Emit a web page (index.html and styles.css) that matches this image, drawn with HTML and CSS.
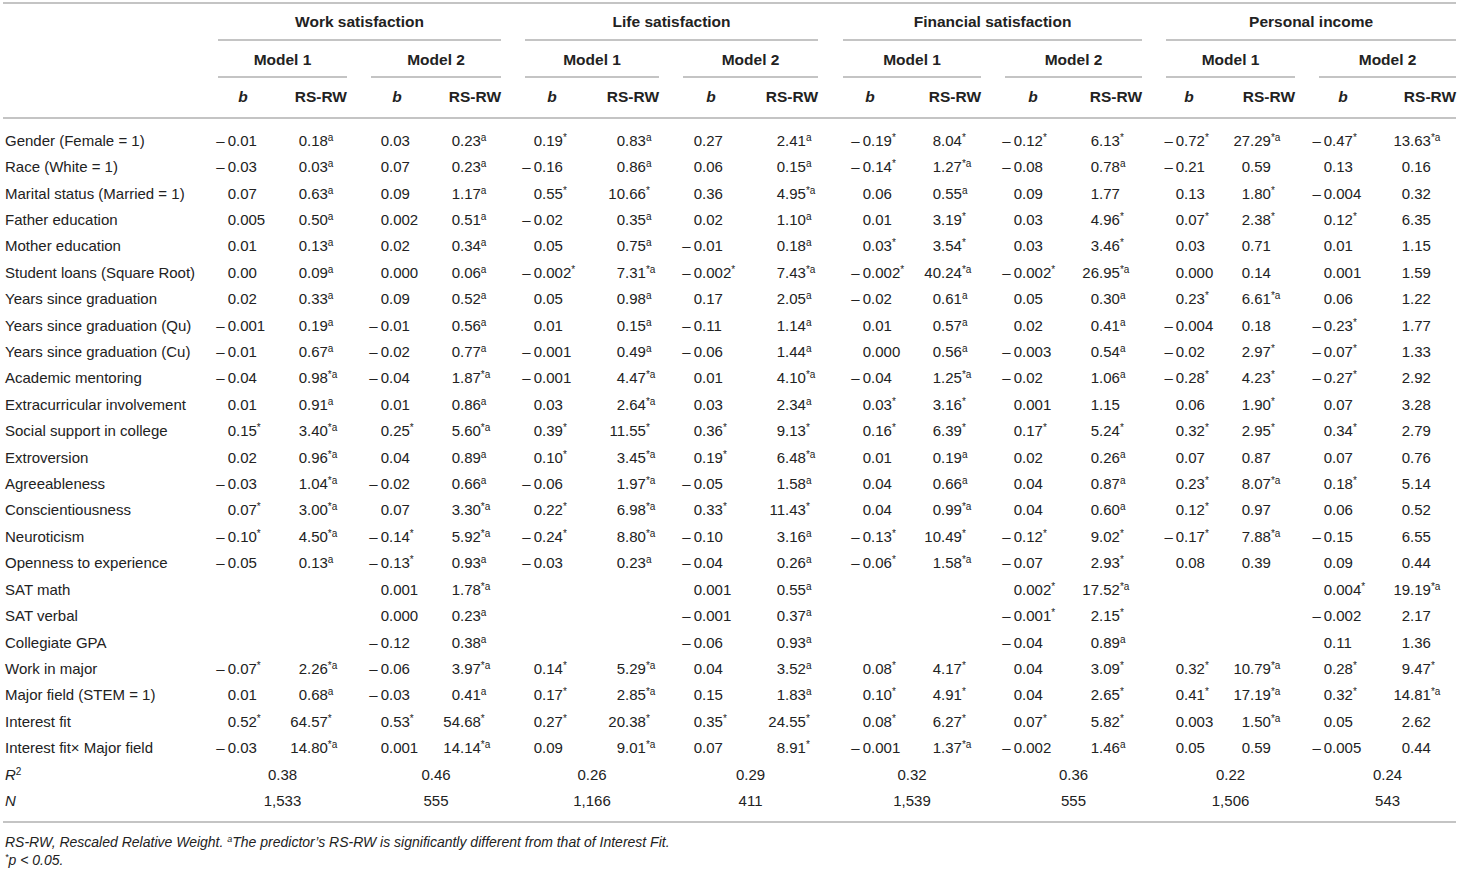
FILE: index.html
```html
<!DOCTYPE html>
<html lang="en">
<head>
<meta charset="utf-8">
<title>Relative weights table</title>
<link rel="stylesheet" href="styles.css">
</head>
<body>
<table class="tbl">
<colgroup>
<col class="c1"><col class="c2"><col class="c3"><col class="c4"><col class="c5"><col class="c6"><col class="c7"><col class="c8"><col class="c9"><col class="c10"><col class="c11"><col class="c12"><col class="c13"><col class="c14"><col class="c15"><col class="c16"><col class="c17">
</colgroup>
<thead>
<tr class="h1">
<th class="lab" rowspan="3"></th>
<th colspan="4"><div>Work satisfaction</div></th>
<th colspan="4"><div>Life satisfaction</div></th>
<th colspan="4"><div>Financial satisfaction</div></th>
<th colspan="4"><div>Personal income</div></th>
</tr>
<tr class="h2">
<th colspan="2"><div>Model 1</div></th>
<th colspan="2"><div>Model 2</div></th>
<th colspan="2"><div>Model 1</div></th>
<th colspan="2"><div>Model 2</div></th>
<th colspan="2"><div>Model 1</div></th>
<th colspan="2"><div>Model 2</div></th>
<th colspan="2"><div>Model 1</div></th>
<th colspan="2"><div>Model 2</div></th>
</tr>
<tr class="h3">
<th class="bh"><i>b</i></th><th class="rh">RS-RW</th>
<th class="bh"><i>b</i></th><th class="rh">RS-RW</th>
<th class="bh"><i>b</i></th><th class="rh">RS-RW</th>
<th class="bh"><i>b</i></th><th class="rh">RS-RW</th>
<th class="bh"><i>b</i></th><th class="rh">RS-RW</th>
<th class="bh"><i>b</i></th><th class="rh">RS-RW</th>
<th class="bh"><i>b</i></th><th class="rh">RS-RW</th>
<th class="bh"><i>b</i></th><th class="rh">RS-RW</th>
</tr>
</thead>
<tbody>
<tr><td>Gender (Female = 1)</td>
<td><span>–&thinsp;0</span>.01</td><td><span>0</span>.18<sup>a</sup></td>
<td><span>0</span>.03</td><td><span>0</span>.23<sup>a</sup></td>
<td><span>0</span>.19<sup>*</sup></td><td><span>0</span>.83<sup>a</sup></td>
<td><span>0</span>.27</td><td><span>2</span>.41<sup>a</sup></td>
<td><span>–&thinsp;0</span>.19<sup>*</sup></td><td><span>8</span>.04<sup>*</sup></td>
<td><span>–&thinsp;0</span>.12<sup>*</sup></td><td><span>6</span>.13<sup>*</sup></td>
<td><span>–&thinsp;0</span>.72<sup>*</sup></td><td><span>27</span>.29<sup>*a</sup></td>
<td><span>–&thinsp;0</span>.47<sup>*</sup></td><td><span>13</span>.63<sup>*a</sup></td></tr>
<tr><td>Race (White = 1)</td>
<td><span>–&thinsp;0</span>.03</td><td><span>0</span>.03<sup>a</sup></td>
<td><span>0</span>.07</td><td><span>0</span>.23<sup>a</sup></td>
<td><span>–&thinsp;0</span>.16</td><td><span>0</span>.86<sup>a</sup></td>
<td><span>0</span>.06</td><td><span>0</span>.15<sup>a</sup></td>
<td><span>–&thinsp;0</span>.14<sup>*</sup></td><td><span>1</span>.27<sup>*a</sup></td>
<td><span>–&thinsp;0</span>.08</td><td><span>0</span>.78<sup>a</sup></td>
<td><span>–&thinsp;0</span>.21</td><td><span>0</span>.59</td>
<td><span>0</span>.13</td><td><span>0</span>.16</td></tr>
<tr><td>Marital status (Married = 1)</td>
<td><span>0</span>.07</td><td><span>0</span>.63<sup>a</sup></td>
<td><span>0</span>.09</td><td><span>1</span>.17<sup>a</sup></td>
<td><span>0</span>.55<sup>*</sup></td><td><span>10</span>.66<sup>*</sup></td>
<td><span>0</span>.36</td><td><span>4</span>.95<sup>*a</sup></td>
<td><span>0</span>.06</td><td><span>0</span>.55<sup>a</sup></td>
<td><span>0</span>.09</td><td><span>1</span>.77</td>
<td><span>0</span>.13</td><td><span>1</span>.80<sup>*</sup></td>
<td><span>–&thinsp;0</span>.004</td><td><span>0</span>.32</td></tr>
<tr><td>Father education</td>
<td><span>0</span>.005</td><td><span>0</span>.50<sup>a</sup></td>
<td><span>0</span>.002</td><td><span>0</span>.51<sup>a</sup></td>
<td><span>–&thinsp;0</span>.02</td><td><span>0</span>.35<sup>a</sup></td>
<td><span>0</span>.02</td><td><span>1</span>.10<sup>a</sup></td>
<td><span>0</span>.01</td><td><span>3</span>.19<sup>*</sup></td>
<td><span>0</span>.03</td><td><span>4</span>.96<sup>*</sup></td>
<td><span>0</span>.07<sup>*</sup></td><td><span>2</span>.38<sup>*</sup></td>
<td><span>0</span>.12<sup>*</sup></td><td><span>6</span>.35</td></tr>
<tr><td>Mother education</td>
<td><span>0</span>.01</td><td><span>0</span>.13<sup>a</sup></td>
<td><span>0</span>.02</td><td><span>0</span>.34<sup>a</sup></td>
<td><span>0</span>.05</td><td><span>0</span>.75<sup>a</sup></td>
<td><span>–&thinsp;0</span>.01</td><td><span>0</span>.18<sup>a</sup></td>
<td><span>0</span>.03<sup>*</sup></td><td><span>3</span>.54<sup>*</sup></td>
<td><span>0</span>.03</td><td><span>3</span>.46<sup>*</sup></td>
<td><span>0</span>.03</td><td><span>0</span>.71</td>
<td><span>0</span>.01</td><td><span>1</span>.15</td></tr>
<tr><td>Student loans (Square Root)</td>
<td><span>0</span>.00</td><td><span>0</span>.09<sup>a</sup></td>
<td><span>0</span>.000</td><td><span>0</span>.06<sup>a</sup></td>
<td><span>–&thinsp;0</span>.002<sup>*</sup></td><td><span>7</span>.31<sup>*a</sup></td>
<td><span>–&thinsp;0</span>.002<sup>*</sup></td><td><span>7</span>.43<sup>*a</sup></td>
<td><span>–&thinsp;0</span>.002<sup>*</sup></td><td><span>40</span>.24<sup>*a</sup></td>
<td><span>–&thinsp;0</span>.002<sup>*</sup></td><td><span>26</span>.95<sup>*a</sup></td>
<td><span>0</span>.000</td><td><span>0</span>.14</td>
<td><span>0</span>.001</td><td><span>1</span>.59</td></tr>
<tr><td>Years since graduation</td>
<td><span>0</span>.02</td><td><span>0</span>.33<sup>a</sup></td>
<td><span>0</span>.09</td><td><span>0</span>.52<sup>a</sup></td>
<td><span>0</span>.05</td><td><span>0</span>.98<sup>a</sup></td>
<td><span>0</span>.17</td><td><span>2</span>.05<sup>a</sup></td>
<td><span>–&thinsp;0</span>.02</td><td><span>0</span>.61<sup>a</sup></td>
<td><span>0</span>.05</td><td><span>0</span>.30<sup>a</sup></td>
<td><span>0</span>.23<sup>*</sup></td><td><span>6</span>.61<sup>*a</sup></td>
<td><span>0</span>.06</td><td><span>1</span>.22</td></tr>
<tr><td>Years since graduation (Qu)</td>
<td><span>–&thinsp;0</span>.001</td><td><span>0</span>.19<sup>a</sup></td>
<td><span>–&thinsp;0</span>.01</td><td><span>0</span>.56<sup>a</sup></td>
<td><span>0</span>.01</td><td><span>0</span>.15<sup>a</sup></td>
<td><span>–&thinsp;0</span>.11</td><td><span>1</span>.14<sup>a</sup></td>
<td><span>0</span>.01</td><td><span>0</span>.57<sup>a</sup></td>
<td><span>0</span>.02</td><td><span>0</span>.41<sup>a</sup></td>
<td><span>–&thinsp;0</span>.004</td><td><span>0</span>.18</td>
<td><span>–&thinsp;0</span>.23<sup>*</sup></td><td><span>1</span>.77</td></tr>
<tr><td>Years since graduation (Cu)</td>
<td><span>–&thinsp;0</span>.01</td><td><span>0</span>.67<sup>a</sup></td>
<td><span>–&thinsp;0</span>.02</td><td><span>0</span>.77<sup>a</sup></td>
<td><span>–&thinsp;0</span>.001</td><td><span>0</span>.49<sup>a</sup></td>
<td><span>–&thinsp;0</span>.06</td><td><span>1</span>.44<sup>a</sup></td>
<td><span>0</span>.000</td><td><span>0</span>.56<sup>a</sup></td>
<td><span>–&thinsp;0</span>.003</td><td><span>0</span>.54<sup>a</sup></td>
<td><span>–&thinsp;0</span>.02</td><td><span>2</span>.97<sup>*</sup></td>
<td><span>–&thinsp;0</span>.07<sup>*</sup></td><td><span>1</span>.33</td></tr>
<tr><td>Academic mentoring</td>
<td><span>–&thinsp;0</span>.04</td><td><span>0</span>.98<sup>*a</sup></td>
<td><span>–&thinsp;0</span>.04</td><td><span>1</span>.87<sup>*a</sup></td>
<td><span>–&thinsp;0</span>.001</td><td><span>4</span>.47<sup>*a</sup></td>
<td><span>0</span>.01</td><td><span>4</span>.10<sup>*a</sup></td>
<td><span>–&thinsp;0</span>.04</td><td><span>1</span>.25<sup>*a</sup></td>
<td><span>–&thinsp;0</span>.02</td><td><span>1</span>.06<sup>a</sup></td>
<td><span>–&thinsp;0</span>.28<sup>*</sup></td><td><span>4</span>.23<sup>*</sup></td>
<td><span>–&thinsp;0</span>.27<sup>*</sup></td><td><span>2</span>.92</td></tr>
<tr><td>Extracurricular involvement</td>
<td><span>0</span>.01</td><td><span>0</span>.91<sup>a</sup></td>
<td><span>0</span>.01</td><td><span>0</span>.86<sup>a</sup></td>
<td><span>0</span>.03</td><td><span>2</span>.64<sup>*a</sup></td>
<td><span>0</span>.03</td><td><span>2</span>.34<sup>a</sup></td>
<td><span>0</span>.03<sup>*</sup></td><td><span>3</span>.16<sup>*</sup></td>
<td><span>0</span>.001</td><td><span>1</span>.15</td>
<td><span>0</span>.06</td><td><span>1</span>.90<sup>*</sup></td>
<td><span>0</span>.07</td><td><span>3</span>.28</td></tr>
<tr><td>Social support in college</td>
<td><span>0</span>.15<sup>*</sup></td><td><span>3</span>.40<sup>*a</sup></td>
<td><span>0</span>.25<sup>*</sup></td><td><span>5</span>.60<sup>*a</sup></td>
<td><span>0</span>.39<sup>*</sup></td><td><span>11</span>.55<sup>*</sup></td>
<td><span>0</span>.36<sup>*</sup></td><td><span>9</span>.13<sup>*</sup></td>
<td><span>0</span>.16<sup>*</sup></td><td><span>6</span>.39<sup>*</sup></td>
<td><span>0</span>.17<sup>*</sup></td><td><span>5</span>.24<sup>*</sup></td>
<td><span>0</span>.32<sup>*</sup></td><td><span>2</span>.95<sup>*</sup></td>
<td><span>0</span>.34<sup>*</sup></td><td><span>2</span>.79</td></tr>
<tr><td>Extroversion</td>
<td><span>0</span>.02</td><td><span>0</span>.96<sup>*a</sup></td>
<td><span>0</span>.04</td><td><span>0</span>.89<sup>a</sup></td>
<td><span>0</span>.10<sup>*</sup></td><td><span>3</span>.45<sup>*a</sup></td>
<td><span>0</span>.19<sup>*</sup></td><td><span>6</span>.48<sup>*a</sup></td>
<td><span>0</span>.01</td><td><span>0</span>.19<sup>a</sup></td>
<td><span>0</span>.02</td><td><span>0</span>.26<sup>a</sup></td>
<td><span>0</span>.07</td><td><span>0</span>.87</td>
<td><span>0</span>.07</td><td><span>0</span>.76</td></tr>
<tr><td>Agreeableness</td>
<td><span>–&thinsp;0</span>.03</td><td><span>1</span>.04<sup>*a</sup></td>
<td><span>–&thinsp;0</span>.02</td><td><span>0</span>.66<sup>a</sup></td>
<td><span>–&thinsp;0</span>.06</td><td><span>1</span>.97<sup>*a</sup></td>
<td><span>–&thinsp;0</span>.05</td><td><span>1</span>.58<sup>a</sup></td>
<td><span>0</span>.04</td><td><span>0</span>.66<sup>a</sup></td>
<td><span>0</span>.04</td><td><span>0</span>.87<sup>a</sup></td>
<td><span>0</span>.23<sup>*</sup></td><td><span>8</span>.07<sup>*a</sup></td>
<td><span>0</span>.18<sup>*</sup></td><td><span>5</span>.14</td></tr>
<tr><td>Conscientiousness</td>
<td><span>0</span>.07<sup>*</sup></td><td><span>3</span>.00<sup>*a</sup></td>
<td><span>0</span>.07</td><td><span>3</span>.30<sup>*a</sup></td>
<td><span>0</span>.22<sup>*</sup></td><td><span>6</span>.98<sup>*a</sup></td>
<td><span>0</span>.33<sup>*</sup></td><td><span>11</span>.43<sup>*</sup></td>
<td><span>0</span>.04</td><td><span>0</span>.99<sup>*a</sup></td>
<td><span>0</span>.04</td><td><span>0</span>.60<sup>a</sup></td>
<td><span>0</span>.12<sup>*</sup></td><td><span>0</span>.97</td>
<td><span>0</span>.06</td><td><span>0</span>.52</td></tr>
<tr><td>Neuroticism</td>
<td><span>–&thinsp;0</span>.10<sup>*</sup></td><td><span>4</span>.50<sup>*a</sup></td>
<td><span>–&thinsp;0</span>.14<sup>*</sup></td><td><span>5</span>.92<sup>*a</sup></td>
<td><span>–&thinsp;0</span>.24<sup>*</sup></td><td><span>8</span>.80<sup>*a</sup></td>
<td><span>–&thinsp;0</span>.10</td><td><span>3</span>.16<sup>a</sup></td>
<td><span>–&thinsp;0</span>.13<sup>*</sup></td><td><span>10</span>.49<sup>*</sup></td>
<td><span>–&thinsp;0</span>.12<sup>*</sup></td><td><span>9</span>.02<sup>*</sup></td>
<td><span>–&thinsp;0</span>.17<sup>*</sup></td><td><span>7</span>.88<sup>*a</sup></td>
<td><span>–&thinsp;0</span>.15</td><td><span>6</span>.55</td></tr>
<tr><td>Openness to experience</td>
<td><span>–&thinsp;0</span>.05</td><td><span>0</span>.13<sup>a</sup></td>
<td><span>–&thinsp;0</span>.13<sup>*</sup></td><td><span>0</span>.93<sup>a</sup></td>
<td><span>–&thinsp;0</span>.03</td><td><span>0</span>.23<sup>a</sup></td>
<td><span>–&thinsp;0</span>.04</td><td><span>0</span>.26<sup>a</sup></td>
<td><span>–&thinsp;0</span>.06<sup>*</sup></td><td><span>1</span>.58<sup>*a</sup></td>
<td><span>–&thinsp;0</span>.07</td><td><span>2</span>.93<sup>*</sup></td>
<td><span>0</span>.08</td><td><span>0</span>.39</td>
<td><span>0</span>.09</td><td><span>0</span>.44</td></tr>
<tr><td>SAT math</td>
<td></td><td></td>
<td><span>0</span>.001</td><td><span>1</span>.78<sup>*a</sup></td>
<td></td><td></td>
<td><span>0</span>.001</td><td><span>0</span>.55<sup>a</sup></td>
<td></td><td></td>
<td><span>0</span>.002<sup>*</sup></td><td><span>17</span>.52<sup>*a</sup></td>
<td></td><td></td>
<td><span>0</span>.004<sup>*</sup></td><td><span>19</span>.19<sup>*a</sup></td></tr>
<tr><td>SAT verbal</td>
<td></td><td></td>
<td><span>0</span>.000</td><td><span>0</span>.23<sup>a</sup></td>
<td></td><td></td>
<td><span>–&thinsp;0</span>.001</td><td><span>0</span>.37<sup>a</sup></td>
<td></td><td></td>
<td><span>–&thinsp;0</span>.001<sup>*</sup></td><td><span>2</span>.15<sup>*</sup></td>
<td></td><td></td>
<td><span>–&thinsp;0</span>.002</td><td><span>2</span>.17</td></tr>
<tr><td>Collegiate GPA</td>
<td></td><td></td>
<td><span>–&thinsp;0</span>.12</td><td><span>0</span>.38<sup>a</sup></td>
<td></td><td></td>
<td><span>–&thinsp;0</span>.06</td><td><span>0</span>.93<sup>a</sup></td>
<td></td><td></td>
<td><span>–&thinsp;0</span>.04</td><td><span>0</span>.89<sup>a</sup></td>
<td></td><td></td>
<td><span>0</span>.11</td><td><span>1</span>.36</td></tr>
<tr><td>Work in major</td>
<td><span>–&thinsp;0</span>.07<sup>*</sup></td><td><span>2</span>.26<sup>*a</sup></td>
<td><span>–&thinsp;0</span>.06</td><td><span>3</span>.97<sup>*a</sup></td>
<td><span>0</span>.14<sup>*</sup></td><td><span>5</span>.29<sup>*a</sup></td>
<td><span>0</span>.04</td><td><span>3</span>.52<sup>a</sup></td>
<td><span>0</span>.08<sup>*</sup></td><td><span>4</span>.17<sup>*</sup></td>
<td><span>0</span>.04</td><td><span>3</span>.09<sup>*</sup></td>
<td><span>0</span>.32<sup>*</sup></td><td><span>10</span>.79<sup>*a</sup></td>
<td><span>0</span>.28<sup>*</sup></td><td><span>9</span>.47<sup>*</sup></td></tr>
<tr><td>Major field (STEM = 1)</td>
<td><span>0</span>.01</td><td><span>0</span>.68<sup>a</sup></td>
<td><span>–&thinsp;0</span>.03</td><td><span>0</span>.41<sup>a</sup></td>
<td><span>0</span>.17<sup>*</sup></td><td><span>2</span>.85<sup>*a</sup></td>
<td><span>0</span>.15</td><td><span>1</span>.83<sup>a</sup></td>
<td><span>0</span>.10<sup>*</sup></td><td><span>4</span>.91<sup>*</sup></td>
<td><span>0</span>.04</td><td><span>2</span>.65<sup>*</sup></td>
<td><span>0</span>.41<sup>*</sup></td><td><span>17</span>.19<sup>*a</sup></td>
<td><span>0</span>.32<sup>*</sup></td><td><span>14</span>.81<sup>*a</sup></td></tr>
<tr><td>Interest fit</td>
<td><span>0</span>.52<sup>*</sup></td><td><span>64</span>.57<sup>*</sup></td>
<td><span>0</span>.53<sup>*</sup></td><td><span>54</span>.68<sup>*</sup></td>
<td><span>0</span>.27<sup>*</sup></td><td><span>20</span>.38<sup>*</sup></td>
<td><span>0</span>.35<sup>*</sup></td><td><span>24</span>.55<sup>*</sup></td>
<td><span>0</span>.08<sup>*</sup></td><td><span>6</span>.27<sup>*</sup></td>
<td><span>0</span>.07<sup>*</sup></td><td><span>5</span>.82<sup>*</sup></td>
<td><span>0</span>.003</td><td><span>1</span>.50<sup>*a</sup></td>
<td><span>0</span>.05</td><td><span>2</span>.62</td></tr>
<tr><td>Interest fit× Major field</td>
<td><span>–&thinsp;0</span>.03</td><td><span>14</span>.80<sup>*a</sup></td>
<td><span>0</span>.001</td><td><span>14</span>.14<sup>*a</sup></td>
<td><span>0</span>.09</td><td><span>9</span>.01<sup>*a</sup></td>
<td><span>0</span>.07</td><td><span>8</span>.91<sup>*</sup></td>
<td><span>–&thinsp;0</span>.001</td><td><span>1</span>.37<sup>*a</sup></td>
<td><span>–&thinsp;0</span>.002</td><td><span>1</span>.46<sup>a</sup></td>
<td><span>0</span>.05</td><td><span>0</span>.59</td>
<td><span>–&thinsp;0</span>.005</td><td><span>0</span>.44</td></tr>
<tr class="tot"><td><i>R</i><sup>2</sup></td>
<td colspan="2">0.38</td><td colspan="2">0.46</td><td colspan="2">0.26</td><td colspan="2">0.29</td>
<td colspan="2">0.32</td><td colspan="2">0.36</td><td colspan="2">0.22</td><td colspan="2">0.24</td></tr>
<tr class="tot"><td><i>N</i></td>
<td colspan="2">1,533</td><td colspan="2">555</td><td colspan="2">1,166</td><td colspan="2">411</td>
<td colspan="2">1,539</td><td colspan="2">555</td><td colspan="2">1,506</td><td colspan="2">543</td></tr>
</tbody>
</table>
<div class="note">
<p>RS-RW, Rescaled Relative Weight. <sup>a</sup>The predictor’s RS-RW is significantly different from that of Interest Fit.</p>
<p><sup>*</sup>p &lt; 0.05.</p>
</div>
</body>
</html>
```
FILE: styles.css
```css
* { box-sizing: border-box; }

body {
  margin: 0;
  background: #ffffff;
  color: #222222;
  font-family: "Liberation Sans", Arial, Helvetica, sans-serif;
}

.tbl {
  border-collapse: separate;
  border-spacing: 0;
  table-layout: fixed;
  width: 1453px;
  margin: 2px 0 0 3px;
  font-size: 15px;
}

.c1 { width: 211px; }
.c2 { width: 54px; }
.c3 { width: 79px; }
.c4 { width: 76px; }
.c5 { width: 78px; }
.c6 { width: 78px; }
.c7 { width: 80px; }
.c8 { width: 80px; }
.c9 { width: 79px; }
.c10 { width: 79px; }
.c11 { width: 84px; }
.c12 { width: 80px; }
.c13 { width: 81px; }
.c14 { width: 70px; }
.c15 { width: 83px; }
.c16 { width: 72px; }
.c17 { width: 89px; }

/* header */
.tbl th {
  font-size: 15.5px;
  font-weight: bold;
  line-height: 18px;
  padding: 0;
  text-align: center;
  white-space: nowrap;
  vertical-align: bottom;
}

.tbl th div {
  border-bottom: 2px solid #c4c4c4;
}

.tbl th.lab {
  border-top: 2px solid #c4c4c4;
  border-bottom: 2px solid #c4c4c4;
}

.h1 th {
  border-top: 2px solid #c4c4c4;
  padding-top: 9px;
}
.h1 th div { padding-bottom: 8px; }
.h1 th:nth-child(2) div { margin-left: 4px; }
.h1 th:nth-child(3) div { margin-left: 24px; }
.h1 th:nth-child(4) div { margin-left: 25px; }
.h1 th:nth-child(5) div { margin-left: 24px; }

.h2 th { padding-top: 10px; }
.h2 th div { padding-bottom: 7px; margin-left: 24px; }
.h2 th:nth-child(1) div { margin-left: 4px; }
.h2 th:nth-child(5) div { margin-left: 25px; }

.h3 th {
  padding-top: 10px;
  padding-bottom: 11px;
  border-bottom: 2px solid #c4c4c4;
}
.h3 th.bh { padding-left: 24px; }
.h3 th.bh:nth-child(1) { padding-left: 4px; }
.h3 th.bh:nth-child(9) { padding-left: 25px; }
.h3 th.rh { text-align: right; }

/* body */
.tbl td {
  padding: 0;
  line-height: 26.4px;
  white-space: nowrap;
  text-align: left;
  vertical-align: middle;
}

.tbl td:nth-child(1) { padding-left: 2px; }
.tbl td:nth-child(2) { padding-left: 1px; }
.tbl td:nth-child(3) { padding-left: 22px; }
.tbl td:nth-child(4) { padding-left: 21px; }
.tbl td:nth-child(5) { padding-left: 20px; }
.tbl td:nth-child(6) { padding-left: 20px; }
.tbl td:nth-child(7) { padding-left: 29px; }
.tbl td:nth-child(8) { padding-left: 22px; }
.tbl td:nth-child(9) { padding-left: 29px; }
.tbl td:nth-child(10) { padding-left: 32px; }
.tbl td:nth-child(11) { padding-left: 27px; }
.tbl td:nth-child(12) { padding-left: 20px; }
.tbl td:nth-child(13) { padding-left: 21px; }
.tbl td:nth-child(14) { padding-left: 21px; }
.tbl td:nth-child(15) { padding-left: 21px; }
.tbl td:nth-child(16) { padding-left: 16px; }
.tbl td:nth-child(17) { padding-left: 26px; }

.tbl td span {
  display: inline-block;
  width: 17px;
  text-align: right;
}
.tbl td:nth-child(even) span {
  width: 21px;
}

.tbl tbody tr:first-child td { padding-top: 8.8px; }
.tbl tbody tr:last-child td {
  padding-bottom: 6.8px;
  border-bottom: 2px solid #c4c4c4;
}

.tbl .tot td { text-align: center; padding-left: 24px; }
.tbl .tot td:nth-child(1) { text-align: left; padding-left: 2px; }
.tbl .tot td:nth-child(2) { padding-left: 4px; }
.tbl .tot td:nth-child(6) { padding-left: 25px; }

.tbl sup {
  font-size: 10px;
  line-height: 0;
  vertical-align: 5px;
}

.note {
  margin: 10px 0 0 5px;
  font-size: 14px;
  line-height: 18px;
  font-style: italic;
}
.note p { margin: 0; }
.note sup {
  font-size: 9px;
  line-height: 0;
  vertical-align: 5px;
}
```
